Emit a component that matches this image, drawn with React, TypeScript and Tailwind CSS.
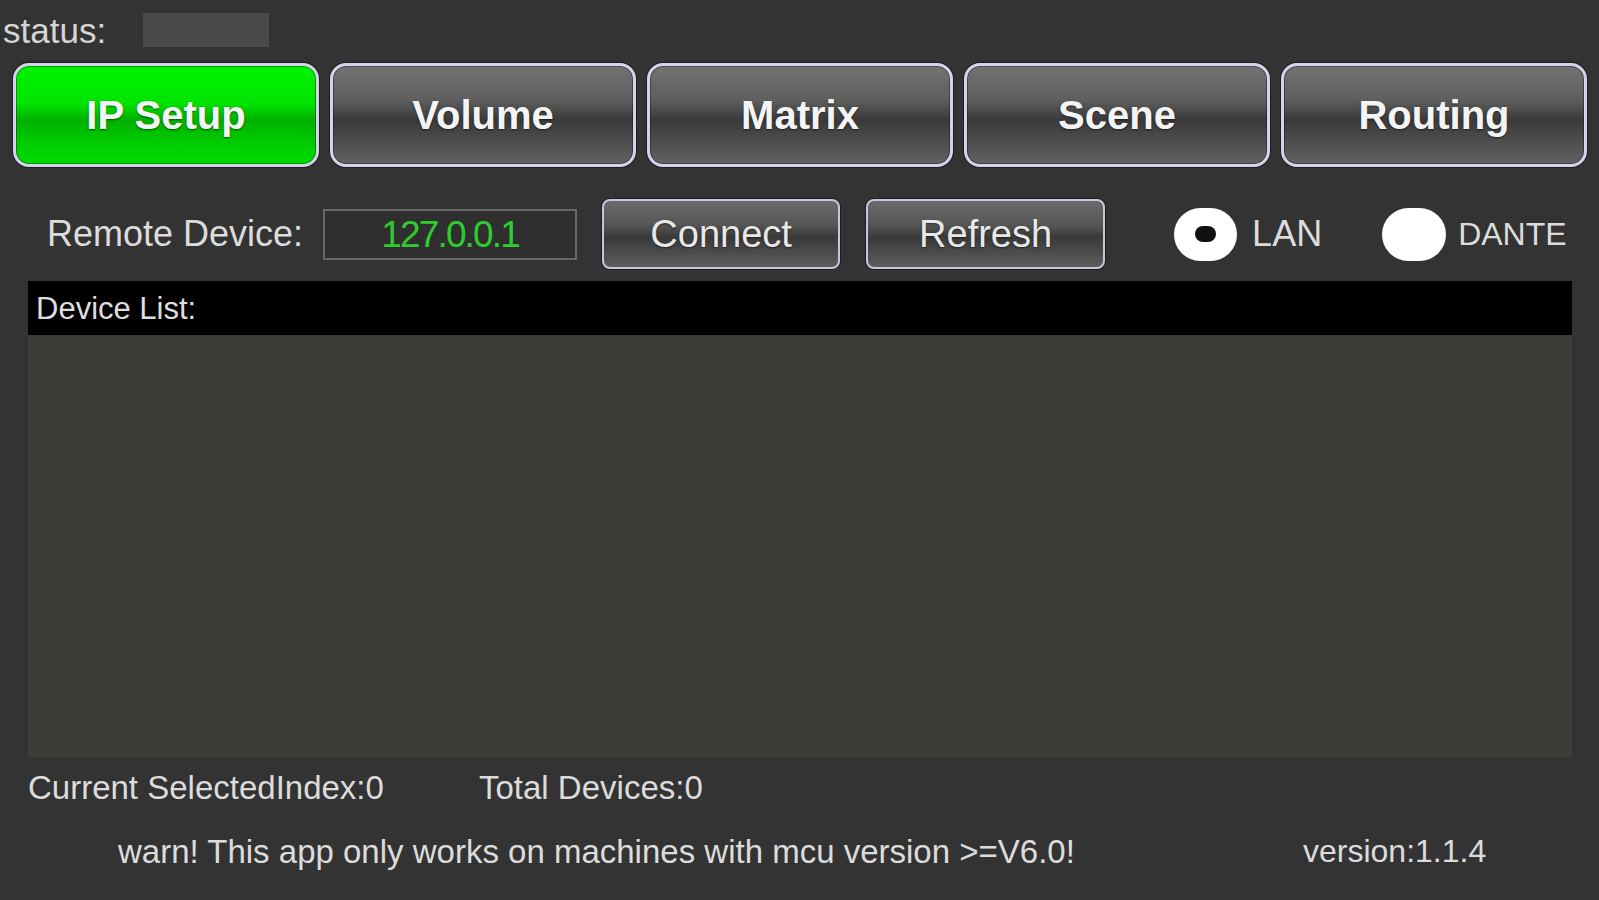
import React from "react";

const tabs = ["IP Setup", "Volume", "Matrix", "Scene", "Routing"];

function TabButton({ label, active }: { label: string; active?: boolean }) {
  return (
    <button
      className={
        "flex h-[104px] w-[306px] items-center justify-center rounded-[16px] border-[3px] border-[#d6d2ee] text-[40px] font-bold text-[#f4f4f4] shadow-[0_0_0_1px_#1e1e1e,inset_0_0_0_1px_rgba(0,0,0,0.35)] [text-shadow:0_1px_2px_rgba(0,0,0,0.55)] " +
        (active
          ? "bg-[linear-gradient(to_bottom,#00f200_0%,#00e400_38%,#00b000_55%,#00c800_75%,#00dc00_100%)]"
          : "bg-[linear-gradient(to_bottom,#727272_0%,#5e5e5e_35%,#393939_55%,#4c4c4c_75%,#626262_100%)]")
      }
    >
      {label}
    </button>
  );
}

function SmallButton({ label, width }: { label: string; width: string }) {
  return (
    <button
      className={
        "flex h-[70px] items-center justify-center rounded-[8px] border-2 border-[#c9c5de] bg-[linear-gradient(to_bottom,#6a6a6a_0%,#575757_35%,#393939_55%,#4a4a4a_75%,#5c5c5c_100%)] text-[38px] text-[#e8e8e8] shadow-[0_0_0_1px_#1e1e1e] [text-shadow:0_1px_2px_rgba(0,0,0,0.5)] " +
        width
      }
    >
      {label}
    </button>
  );
}

export default function App() {
  return (
    <div className="flex h-[900px] w-[1599px] flex-col overflow-hidden bg-[#333333] font-['Liberation_Sans',Arial,sans-serif] text-[#dcdcdc]">
      {/* Status */}
      <div className="flex h-[60px] items-center pl-[3px]">
        <span className="text-[35px] leading-none text-[#d6d6d6]">status:</span>
        <div className="ml-[37px] h-[34px] w-[126px] bg-[#4a4a4a]" />
      </div>

      {/* Tabs */}
      <div className="mt-[3px] flex gap-[11px] pl-[13px]">
        {tabs.map((t, i) => (
          <TabButton key={t} label={t} active={i === 0} />
        ))}
      </div>

      {/* Remote device row */}
      <div className="mt-[31px] flex h-[72px] items-center">
        <span className="pl-[47px] text-[36px] leading-none">Remote Device:</span>
        <div className="ml-[20px] flex h-[51px] w-[254px] items-center justify-center border-2 border-[#686868] bg-[#2f2f2f] text-[37px] leading-none tracking-[-0.05em] text-[#2fcc2f]">
          127.0.0.1
        </div>
        <div className="ml-[25px]">
          <SmallButton label="Connect" width="w-[238px]" />
        </div>
        <div className="ml-[26px]">
          <SmallButton label="Refresh" width="w-[239px]" />
        </div>
        <div className="ml-[69px] flex h-[53px] w-[63px] items-center justify-center rounded-full bg-white">
          <div className="h-[16px] w-[21px] rounded-full bg-[#111]" />
        </div>
        <span className="ml-[15px] text-[36px] leading-none">LAN</span>
        <div className="ml-[60px] h-[53px] w-[64px] rounded-full bg-white" />
        <span className="ml-[12px] text-[32px] leading-none">DANTE</span>
      </div>

      {/* Device list */}
      <div className="ml-[28px] mt-[11px] flex w-[1544px] flex-col">
        <div className="flex h-[54px] items-center bg-black pl-[8px]">
          <span className="text-[31px] leading-none text-[#dedede]">Device List:</span>
        </div>
        <div className="h-[423px] bg-[#3e3c39]" />
      </div>

      {/* Counters */}
      <div className="flex h-[59px] items-center pl-[28px] text-[33px] leading-none">
        <span className="w-[451px]">Current SelectedIndex:0</span>
        <span>Total Devices:0</span>
      </div>

      {/* Warning + version */}
      <div className="flex h-[68px] items-center pl-[118px] leading-none">
        <span className="w-[1185px] text-[33px]">
          warn! This app only works on machines with mcu version &gt;=V6.0!
        </span>
        <span className="text-[32px]">version:1.1.4</span>
      </div>
    </div>
  );
}
